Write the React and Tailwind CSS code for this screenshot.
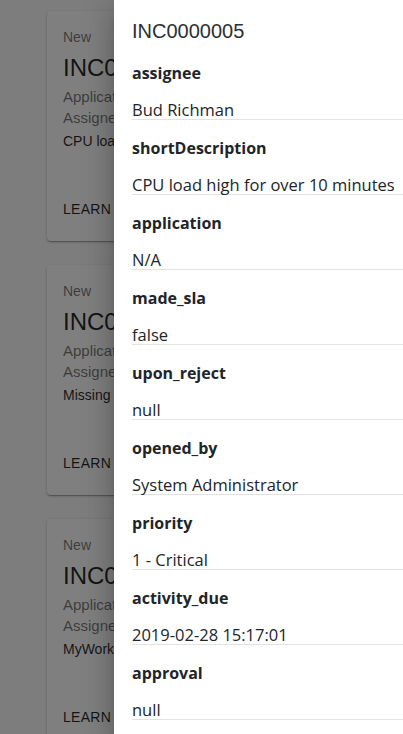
import React from 'react';

const incidents = [
  { id: 'INC0000005', desc: 'CPU load high for over 10 minutes' },
  { id: 'INC0000006', desc: 'Missing expense report' },
  { id: 'INC0000007', desc: 'MyWork app not loading' },
];

const fields = [
  ['assignee', 'Bud Richman'],
  ['shortDescription', 'CPU load high for over 10 minutes'],
  ['application', 'N/A'],
  ['made_sla', 'false'],
  ['upon_reject', 'null'],
  ['opened_by', 'System Administrator'],
  ['priority', '1 - Critical'],
  ['activity_due', '2019-02-28 15:17:01'],
  ['approval', 'null'],
];

function IncidentCard({ item }) {
  return (
    <div className="flex h-[230px] flex-col overflow-hidden rounded bg-white shadow-[0_1px_3px_rgba(0,0,0,0.2),0_1px_1px_rgba(0,0,0,0.14),0_2px_1px_-1px_rgba(0,0,0,0.12)]">
      <div className="px-4 pt-4">
        <div className="mb-[5px] text-[14px] leading-5 text-black/55">New</div>
        <div className="text-[24px] leading-8 text-black/85">{item.id}</div>
        <div className="mt-[2px] text-[15px] leading-[21px] text-black/55">Application: N/A</div>
        <div className="text-[15px] leading-[21px] text-black/55">Assignee: Bud Richman</div>
        <div className="mt-[3px] text-[14px] leading-5 text-black/85">{item.desc}</div>
      </div>
      <div className="mt-auto px-4 pb-5">
        <span className="text-[14px] uppercase leading-5 tracking-[0.3px] text-black/85">Learn more</span>
      </div>
    </div>
  );
}

export default function App() {
  return (
    <div className="relative h-[734px] overflow-hidden bg-[#fafafa] font-['Liberation_Sans',Arial,sans-serif]">
      <div className="flex flex-col gap-6 px-[47px] pt-[11px]">
        {incidents.map((item) => (
          <IncidentCard key={item.id} item={item} />
        ))}
      </div>

      {/* backdrop */}
      <div className="absolute inset-0 bg-black/50" />

      {/* details drawer */}
      <div className="absolute inset-y-0 right-0 w-[289px] overflow-hidden bg-white pl-[18px] pt-[17px] shadow-[0_8px_10px_-5px_rgba(0,0,0,0.2),0_16px_24px_2px_rgba(0,0,0,0.14),0_6px_30px_5px_rgba(0,0,0,0.12)]">
        <div className="mb-px text-[20px] leading-7 text-[#2b2f33]">INC0000005</div>
        {fields.map(([label, value]) => (
          <div key={label} className="font-['Open_Sans','Noto_Sans',sans-serif] text-[#212529]">
            <div className="mt-4 text-[16px] font-bold leading-6">{label}</div>
            <div className="mt-[11px] border-b border-[#e2e2e2] pt-1 text-[16.5px] leading-[19px]">{value}</div>
          </div>
        ))}
      </div>
    </div>
  );
}
